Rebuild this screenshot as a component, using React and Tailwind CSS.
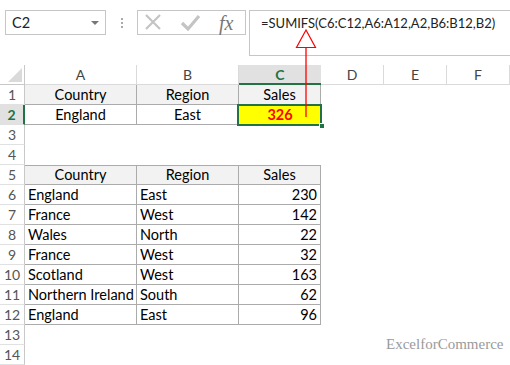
import React from 'react';

const font = { fontFamily: 'Lato, "Open Sans", sans-serif' };

const cols = [
    { key: 'A', w: 'w-[112px]' },
    { key: 'B', w: 'w-[102px]' },
    { key: 'C', w: 'w-[82px]' },
    { key: 'D', w: 'w-[63px]' },
    { key: 'E', w: 'w-[63px]' },
    { key: 'F', w: 'w-[63px]' },
];

const data = [
    ['England', 'East', 230],
    ['France', 'West', 142],
    ['Wales', 'North', 22],
    ['France', 'West', 32],
    ['Scotland', 'West', 163],
    ['Northern Ireland', 'South', 62],
    ['England', 'East', 96],
];

const RowHead = ({ n, active }) => (
    <div
        className={`w-[25px] h-full shrink-0 flex items-center justify-center border-b border-[#e1e1e1] text-[14px] ${
            active
                ? 'bg-[#e1e1e1] border-r-2 border-r-[#217346] text-[#217346] font-bold'
                : 'border-r border-r-[#c8c8c8] text-[#555]'
        }`}
    >
        {n}
    </div>
);

const Cell = ({ w, children, className = '' }) => (
    <div className={`${w} h-full shrink-0 flex items-center whitespace-nowrap overflow-hidden border-r border-b border-[#ababab] ${className}`}>
        {children}
    </div>
);

const Blank = ({ w }) => <div className={`${w} h-full shrink-0`} />;

export default function App() {
    return (
        <div className="relative w-[510px] h-[365px] overflow-hidden bg-white text-[14.5px] text-black" style={font}>
            {/* Formula bar area */}
            <div className="flex items-start h-[65px] pt-[10px] pl-[5px]">
                <div className="w-[101px] h-[25px] shrink-0 border border-[#c6c6c6] flex items-center justify-between pl-[6px] pr-[6px] text-[14.5px] text-[#222]">
                    <span>C2</span>
                    <span className="w-0 h-0 border-l-[4px] border-r-[4px] border-t-[4px] border-l-transparent border-r-transparent border-t-[#777]" />
                </div>
                <div className="w-[31px] h-[25px] shrink-0 flex flex-col items-center justify-center gap-[2px]">
                    <span className="w-[2px] h-[2px] bg-[#aaa]" />
                    <span className="w-[2px] h-[2px] bg-[#aaa]" />
                    <span className="w-[2px] h-[2px] bg-[#aaa]" />
                </div>
                <div className="w-[109px] h-[25px] shrink-0 border border-[#c6c6c6] flex items-center">
                    <svg width="78" height="23" viewBox="0 0 78 23" className="shrink-0">
                        <path d="M8 4 L22 18 M22 4 L8 18" stroke="#c4c4c4" strokeWidth="2.2" fill="none" />
                        <path d="M44 12 L50 18 L61 5" stroke="#c4c4c4" strokeWidth="3.2" fill="none" />
                    </svg>
                    <span
                        className="ml-[3px] text-[20px] leading-none italic text-[#777]"
                        style={{ fontFamily: '"Liberation Serif", serif' }}
                    >
                        fx
                    </span>
                </div>
                <div className="ml-[3px] flex-1 min-w-0 whitespace-nowrap overflow-hidden h-[46px] border-t border-l border-b border-[#c6c6c6] pl-[11px] pt-[3px] text-[13px] text-[#222]">
                    =SUMIFS(C6:C12,A6:A12,A2,B6:B12,B2)
                </div>
            </div>

            {/* Column headers */}
            <div className="flex h-[20px]">
                <div className="w-[25px] h-full shrink-0 border-r border-b border-[#c8c8c8] flex items-end justify-end p-[2px]">
                    <span className="w-0 h-0 border-b-[14px] border-l-[14px] border-b-[#dadada] border-l-transparent" />
                </div>
                {cols.map((c) =>
                    c.key === 'C' ? (
                        <div key={c.key} className={`${c.w} h-full shrink-0 flex items-center justify-center bg-[#e1e1e1] border-b-2 border-[#217346] text-[#217346] font-bold text-[14px]`}>
                            {c.key}
                        </div>
                    ) : (
                        <div key={c.key} className={`${c.w} h-full shrink-0 flex items-center justify-center border-r border-b border-[#dadada] text-[#444] text-[14px]`}>
                            {c.key}
                        </div>
                    )
                )}
            </div>

            {/* Row 1 */}
            <div className="flex h-[20px]">
                <RowHead n={1} />
                <Cell w="w-[112px]" className="justify-center bg-[#f2f2f2]">Country</Cell>
                <Cell w="w-[102px]" className="justify-center bg-[#f2f2f2]">Region</Cell>
                <Cell w="w-[82px]" className="justify-center bg-[#f2f2f2]">Sales</Cell>
            </div>

            {/* Row 2 */}
            <div className="flex h-[20px]">
                <RowHead n={2} active />
                <Cell w="w-[112px]" className="justify-center">England</Cell>
                <Cell w="w-[102px]" className="justify-center">East</Cell>
                <div className="relative w-[82px] h-full shrink-0 flex items-center justify-center bg-[#ffff00] text-[#ff0000] font-bold">
                    326
                    <div className="absolute -left-[2px] -top-[1px] -right-[1px] -bottom-[1px] border-2 border-[#217346]" />
                    <div className="absolute -right-[4px] -bottom-[4px] w-[6px] h-[6px] bg-[#217346] border border-white" />
                </div>
            </div>

            {/* Rows 3, 4 */}
            {[3, 4].map((n) => (
                <div key={n} className="flex h-[20px]">
                    <RowHead n={n} />
                </div>
            ))}

            {/* Row 5 */}
            <div className="flex h-[20px]">
                <RowHead n={5} />
                <Cell w="w-[112px]" className="justify-center bg-[#f2f2f2] border-t">Country</Cell>
                <Cell w="w-[102px]" className="justify-center bg-[#f2f2f2] border-t">Region</Cell>
                <Cell w="w-[82px]" className="justify-center bg-[#f2f2f2] border-t">Sales</Cell>
            </div>

            {data.map(([country, region, sales], i) => (
                <div key={i} className="flex h-[20px]">
                    <RowHead n={i + 6} />
                    <Cell w="w-[112px]" className="pl-[3px]">{country}</Cell>
                    <Cell w="w-[102px]" className="pl-[3px]">{region}</Cell>
                    <Cell w="w-[82px]" className="justify-end pr-[3px]">{sales}</Cell>
                    <Blank w="w-[63px]" />
                </div>
            ))}

            {[13, 14].map((n) => (
                <div key={n} className="flex h-[20px]">
                    <RowHead n={n} />
                </div>
            ))}

            {/* Watermark */}
            <div
                className="absolute left-[386px] top-[333px] text-[15px] text-[#9a9a9a]"
                style={{ fontFamily: '"Liberation Serif", serif' }}
            >
                ExcelforCommerce
            </div>

            {/* Red arrow */}
            <svg className="absolute left-0 top-0 pointer-events-none" width="510" height="365">
                <line x1="306" y1="47" x2="306" y2="117" stroke="#ff0000" strokeWidth="1.3" />
                <polygon points="306,30 296.5,47.5 315.5,47.5" fill="white" stroke="#ff0000" strokeWidth="1.2" />
            </svg>
        </div>
    );
}
